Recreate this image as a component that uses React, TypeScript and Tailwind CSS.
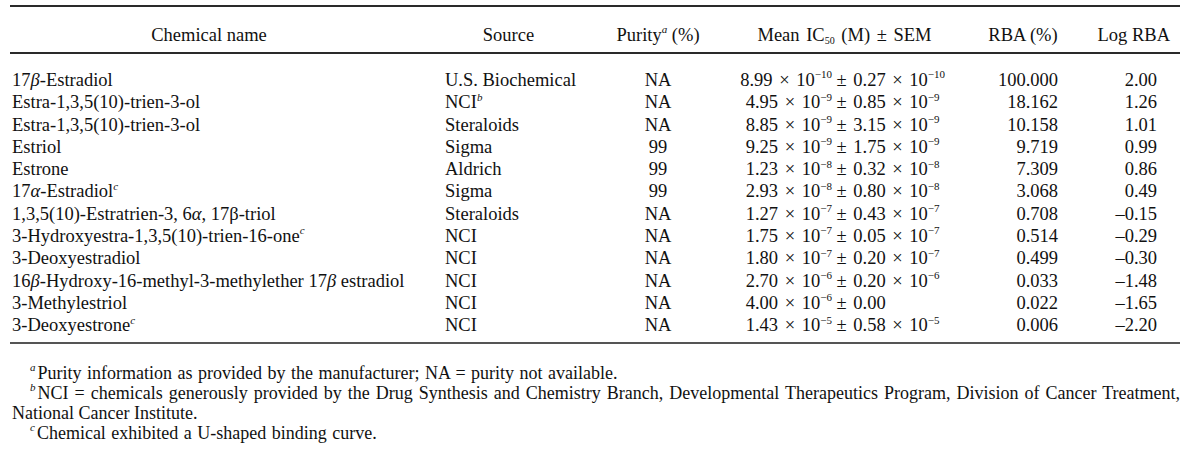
import React from "react";

type Row = {
  name: React.ReactNode;
  source: React.ReactNode;
  purity: string;
  a: string;
  ae: string;
  b: string;
  be?: string;
  rba: string;
  log: string;
};

const Sup = ({ children, italic }: { children: React.ReactNode; italic?: boolean }) => (
  <sup className={`text-[11px] top-[-0.7em] ${italic ? "italic" : ""}`}>{children}</sup>
);

const Beta = () => <span className="italic">β</span>;
const Alpha = () => <span className="italic">α</span>;

const rows: Row[] = [
  { name: <>17<Beta />-Estradiol</>, source: "U.S. Biochemical", purity: "NA", a: "8.99", ae: "−10", b: "0.27", be: "−10", rba: "100.000", log: "2.00" },
  { name: "Estra-1,3,5(10)-trien-3-ol", source: <>NCI<Sup italic>b</Sup></>, purity: "NA", a: "4.95", ae: "−9", b: "0.85", be: "−9", rba: "18.162", log: "1.26" },
  { name: "Estra-1,3,5(10)-trien-3-ol", source: "Steraloids", purity: "NA", a: "8.85", ae: "−9", b: "3.15", be: "−9", rba: "10.158", log: "1.01" },
  { name: "Estriol", source: "Sigma", purity: "99", a: "9.25", ae: "−9", b: "1.75", be: "−9", rba: "9.719", log: "0.99" },
  { name: "Estrone", source: "Aldrich", purity: "99", a: "1.23", ae: "−8", b: "0.32", be: "−8", rba: "7.309", log: "0.86" },
  { name: <>17<Alpha />-Estradiol<Sup italic>c</Sup></>, source: "Sigma", purity: "99", a: "2.93", ae: "−8", b: "0.80", be: "−8", rba: "3.068", log: "0.49" },
  { name: <>1,3,5(10)-Estratrien-3, 6<Alpha />, 17β-triol</>, source: "Steraloids", purity: "NA", a: "1.27", ae: "−7", b: "0.43", be: "−7", rba: "0.708", log: "–0.15" },
  { name: <>3-Hydroxyestra-1,3,5(10)-trien-16-one<Sup italic>c</Sup></>, source: "NCI", purity: "NA", a: "1.75", ae: "−7", b: "0.05", be: "−7", rba: "0.514", log: "–0.29" },
  { name: "3-Deoxyestradiol", source: "NCI", purity: "NA", a: "1.80", ae: "−7", b: "0.20", be: "−7", rba: "0.499", log: "–0.30" },
  { name: <>16<Beta />-Hydroxy-16-methyl-3-methylether 17<Beta /> estradiol</>, source: "NCI", purity: "NA", a: "2.70", ae: "−6", b: "0.20", be: "−6", rba: "0.033", log: "–1.48" },
  { name: "3-Methylestriol", source: "NCI", purity: "NA", a: "4.00", ae: "−6", b: "0.00", rba: "0.022", log: "–1.65" },
  { name: <>3-Deoxyestrone<Sup italic>c</Sup></>, source: "NCI", purity: "NA", a: "1.43", ae: "−5", b: "0.58", be: "−5", rba: "0.006", log: "–2.20" },
];

const grid = "grid grid-cols-[431px_171px_92px_128px_153px_76px_119px]";

export default function App() {
  return (
    <div className="w-[1187px] h-[455px] bg-white pl-[10px] pr-[7px] pt-[5px] font-['Liberation_Serif','Times_New_Roman',serif] text-[18.5px] text-[#111] overflow-hidden">
      <div className="h-[2px] bg-[#2a2a2a]" />
      <div className={`${grid} pt-[17px] pb-[6px] leading-[22px] whitespace-nowrap`}>
        <div className="text-center pr-[33px]">Chemical name</div>
        <div className="text-center pr-[36px]">Source</div>
        <div className="text-center">
          Purity<Sup italic>a</Sup> (%)
        </div>
        <div className="col-span-2 text-center [word-spacing:2px]">
          Mean IC<sub className="text-[10px]">50</sub> (M) ± SEM
        </div>
        <div className="text-center">RBA (%)</div>
        <div className="text-right pr-[10px]">Log RBA</div>
      </div>
      <div className="h-[2px] bg-[#2a2a2a]" />
      <div className="pt-[15px] pb-[5px]">
        {rows.map((r, i) => (
          <div key={i} className={`${grid} leading-[22.3px] whitespace-nowrap`}>
            <div className="pl-[2px]">{r.name}</div>
            <div className="pl-[4px]">{r.source}</div>
            <div className="text-center">{r.purity}</div>
            <div className="text-right [word-spacing:2px]">
              {r.a} × 10<Sup>{r.ae}</Sup>
            </div>
            <div className="pl-[4.5px] [word-spacing:2px]">
              ± {r.b}
              {r.be ? (
                <>
                  {" "}× 10<Sup>{r.be}</Sup>
                </>
              ) : null}
            </div>
            <div className="text-right pr-[3px]">{r.rba}</div>
            <div className="text-right pr-[23px]">{r.log}</div>
          </div>
        ))}
      </div>
      <div className="h-[2px] bg-[#555]" />
      <div className="pt-[19px] leading-[20px] text-[18px]">
        <div className="pl-[20px] [word-spacing:1px]">
          <Sup italic>a</Sup>
          <span className="ml-[2px]">Purity information as provided by the manufacturer; NA = purity not available.</span>
        </div>
        <div className="pl-[20px] text-justify [text-align-last:justify] [word-spacing:-1px]">
          <Sup italic>b</Sup>
          <span className="ml-[2px]">NCI = chemicals generously provided by the Drug Synthesis and Chemistry Branch, Developmental Therapeutics Program, Division of Cancer Treatment,</span>
        </div>
        <div className="pl-[2px]">National Cancer Institute.</div>
        <div className="pl-[20px] [word-spacing:1px]">
          <Sup italic>c</Sup>
          <span className="ml-[2px]">Chemical exhibited a U-shaped binding curve.</span>
        </div>
      </div>
    </div>
  );
}
